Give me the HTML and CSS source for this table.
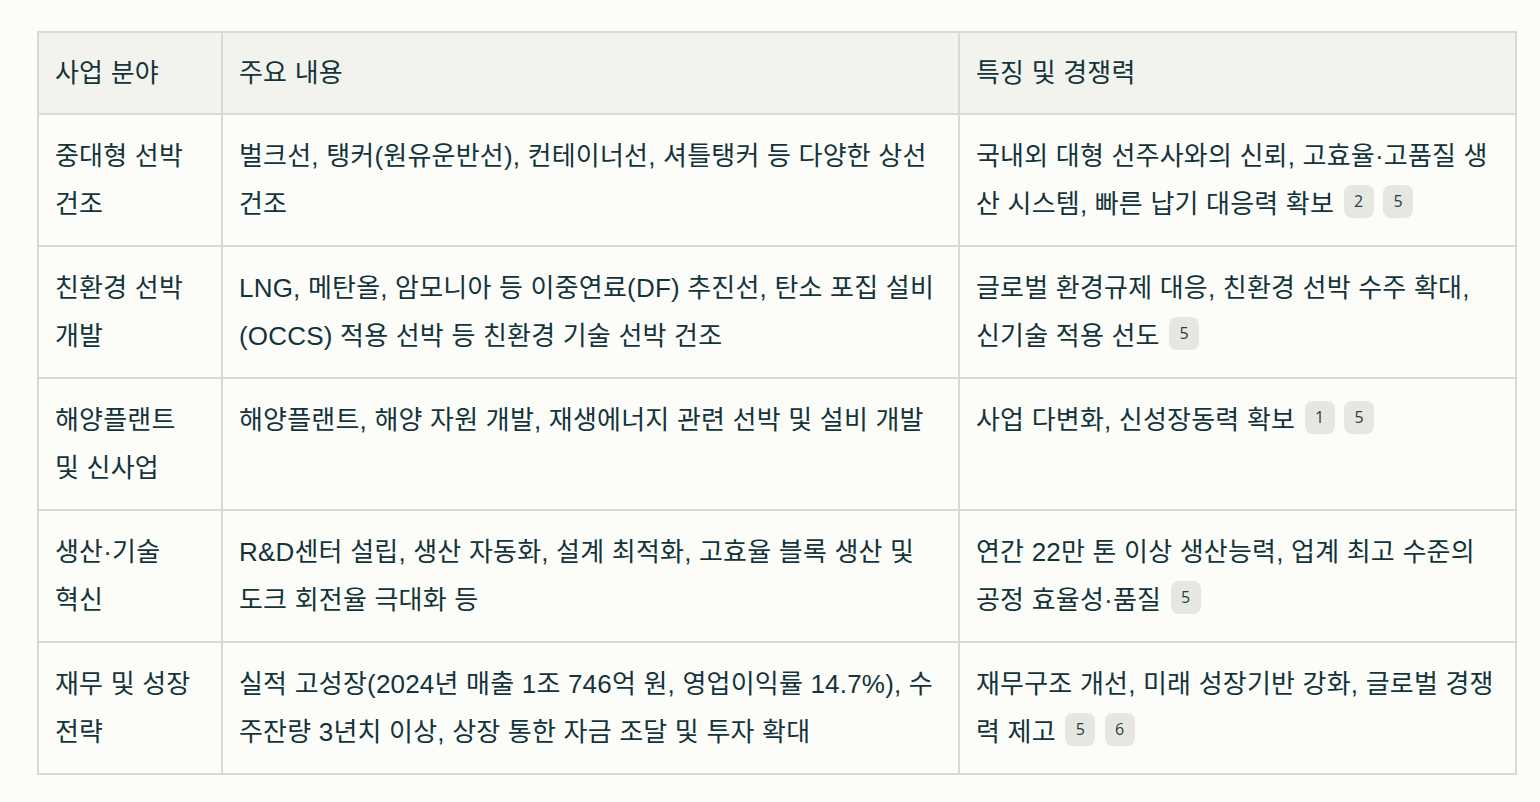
FILE: index.html
```html
<!DOCTYPE html>
<html lang="ko">
<head>
<meta charset="utf-8">
<link rel="stylesheet" href="styles.css">
</head>
<body>
<div class="wrap">
<table class="biz">
  <colgroup>
    <col class="c1"><col class="c2"><col class="c3">
  </colgroup>
  <thead>
    <tr><th>사업 분야</th><th>주요 내용</th><th>특징 및 경쟁력</th></tr>
  </thead>
  <tbody>
    <tr>
      <td class="field">중대형 선박 건조</td>
      <td>벌크선, 탱커(원유운반선), 컨테이너선, 셔틀탱커 등 다양한 상선 건조</td>
      <td>국내외 대형 선주사와의 신뢰, 고효율·고품질 생산 시스템, 빠른 납기 대응력 확보 <span class="cite">2</span> <span class="cite">5</span></td>
    </tr>
    <tr>
      <td class="field">친환경 선박 개발</td>
      <td>LNG, 메탄올, 암모니아 등 이중연료(DF) 추진선, 탄소 포집 설비(OCCS) 적용 선박 등 친환경 기술 선박 건조</td>
      <td>글로벌 환경규제 대응, 친환경 선박 수주 확대, 신기술 적용 선도 <span class="cite">5</span></td>
    </tr>
    <tr>
      <td class="field">해양플랜트 및 신사업</td>
      <td>해양플랜트, 해양 자원 개발, 재생에너지 관련 선박 및 설비 개발</td>
      <td>사업 다변화, 신성장동력 확보 <span class="cite">1</span> <span class="cite">5</span></td>
    </tr>
    <tr>
      <td class="field">생산·기술 혁신</td>
      <td>R&amp;D센터 설립, 생산 자동화, 설계 최적화, 고효율 블록 생산 및 도크 회전율 극대화 등</td>
      <td>연간 22만 톤 이상 생산능력, 업계 최고 수준의 공정 효율성·품질 <span class="cite">5</span></td>
    </tr>
    <tr>
      <td class="field">재무 및 성장 전략</td>
      <td>실적 고성장(2024년 매출 1조 746억 원, 영업이익률 14.7%), 수주잔량 3년치 이상, 상장 통한 자금 조달 및 투자 확대</td>
      <td>재무구조 개선, 미래 성장기반 강화, 글로벌 경쟁력 제고 <span class="cite">5</span> <span class="cite">6</span></td>
    </tr>
  </tbody>
</table>
</div>
</body>
</html>
```

FILE: styles.css
```css
html, body {
  margin: 0;
  padding: 0;
  background: #fcfcf9;
}
body {
  font-family: "Liberation Sans", "Noto Sans CJK KR", sans-serif;
  color: #13343b;
}
.wrap {
  padding: 31px 24px 0 37px;
}
.biz {
  border-collapse: collapse;
  table-layout: fixed;
  width: 1478px;
  font-size: 26px;
  line-height: 48px;
  letter-spacing: 0.2px;
}
.c1 { width: 184px; }
.c2 { width: 737px; }
.c3 { width: 557px; }
.biz th, .biz td {
  border: 2px solid #d9d9d3;
  padding: 17px 14px 17px 16px;
  text-align: left;
  vertical-align: top;
}
.biz td.field {
  word-break: keep-all;
}
.biz th {
  background: #f3f3ee;
  font-weight: 400;
  padding-top: 16px;
  padding-bottom: 16px;
}
.cite {
  display: inline-block;
  background: #e7e7e2;
  color: #2a3d42;
  font-family: "Open Sans", "Noto Sans", sans-serif;
  font-size: 16px;
  letter-spacing: 0;
  line-height: 33px;
  height: 33px;
  min-width: 30px;
  text-align: center;
  border-radius: 8px;
  vertical-align: 6px;
  margin-left: 2px;
}
```
